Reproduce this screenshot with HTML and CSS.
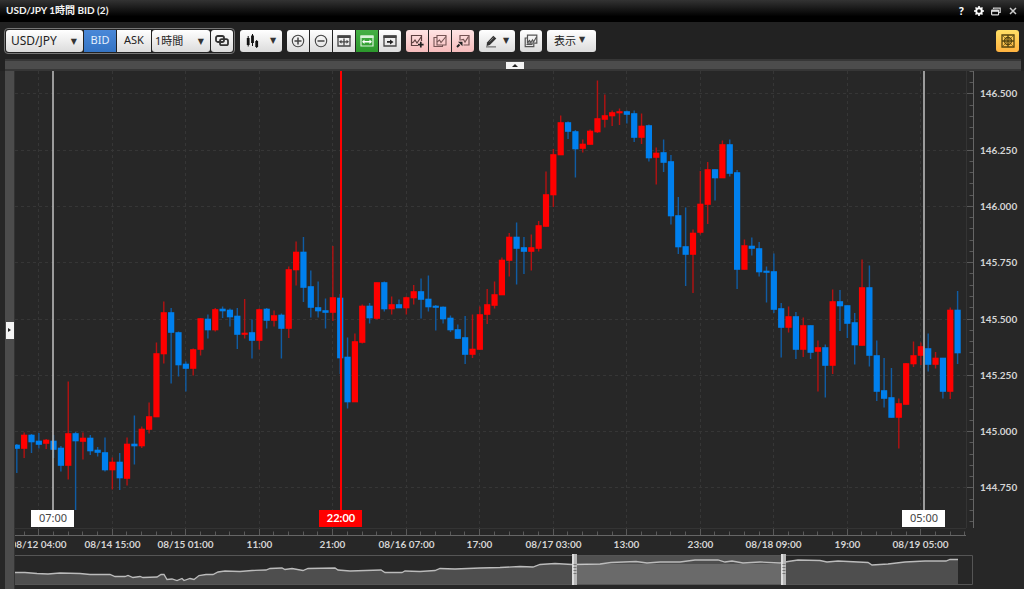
FILE: index.html
```html
<!DOCTYPE html>
<html lang="ja">
<head>
<meta charset="utf-8">
<title>USD/JPY 1時間 BID (2)</title>
<link rel="stylesheet" href="styles.css">
</head>
<body>
<header class="titlebar">
  <h1 class="title">USD/JPY 1時間 BID (2)</h1>
  <nav class="window-actions">
    <button class="win" aria-label="ヘルプ">?</button>
    <button class="win" aria-label="設定"><svg width="10" height="10" viewBox="0 0 10 10"><circle cx="5" cy="5" r="2.8" fill="none" stroke="#fff" stroke-width="1.9"/><path d="M5 0v2M5 8v2M0 5h2M8 5h2M1.5 1.5l1.3 1.3M7.2 7.2l1.3 1.3M8.5 1.5L7.2 2.8M2.8 7.2L1.5 8.5" stroke="#fff" stroke-width="1.6"/></svg></button>
    <button class="win" aria-label="元に戻す"><svg width="10" height="9" viewBox="0 0 10 9"><path d="M2.5 2V1.2h6.7v4.3H8" fill="none" stroke="#ccc" stroke-width="1.2"/><rect x=".6" y="3.2" width="7" height="4.6" rx=".5" fill="none" stroke="#ddd" stroke-width="1.2"/><path d="M1 4h6.4" stroke="#eee" stroke-width="1.5"/></svg></button>
    <button class="win" aria-label="閉じる"><svg width="8" height="8" viewBox="0 0 8 8"><path d="M1 1l6 6M7 1L1 7" stroke="#ccc" stroke-width="1.5"/></svg></button>
  </nav>
</header>

<div class="toolbar">
  <div class="framed">
    <span class="picker"><select class="btn pair" aria-label="通貨ペア"><option>USD/JPY</option></select></span>
    <div class="joined">
      <button class="btn side active">BID</button>
      <button class="btn side ask">ASK</button>
    </div>
    <span class="picker"><select class="btn period" aria-label="足種"><option>1時間</option></select></span>
    <button class="btn" aria-label="連動"><svg width="14" height="12" viewBox="0 0 14 12" fill="none" stroke="#333" stroke-width="1.8"><rect x="1" y="1" width="8" height="6" rx="1.8"/><rect x="5" y="4.2" width="8" height="6" rx="1.8"/></svg></button>
  </div>

  <button class="btn chart-type" aria-label="チャート種類"><svg width="13" height="14" viewBox="0 0 13 14"><path d="M2.2 2v10.500M6.500 0v12M10.700 6v8" stroke="#111" stroke-width="1"/><path d="M.8 4h2.800v7H.8zM5.100 1.500h2.800V9H5.100zM9.300 7h2.800v6H9.300z" fill="#111"/></svg><span class="caret">▼</span></button>

  <div class="joined">
    <button class="btn" aria-label="拡大"><svg width="14" height="14" viewBox="0 0 14 14" fill="none" stroke="#444"><circle cx="7" cy="7" r="5.700" stroke-width="1.100"/><path d="M7 3.500v7M3.500 7h7" stroke-width="1.500"/></svg></button>
    <button class="btn" aria-label="縮小"><svg width="14" height="14" viewBox="0 0 14 14" fill="none" stroke="#444"><circle cx="7" cy="7" r="5.700" stroke-width="1.100"/><path d="M3.500 7h7" stroke-width="1.500"/></svg></button>
    <button class="btn" aria-label="幅調整"><svg width="14" height="12" viewBox="0 0 14 12"><path d="M1 1h12v10H1z" fill="none" stroke="#444" stroke-width="1.300"/><path d="M.5.500h13V3H.5z" fill="#444"/><path d="M2 6.800l2.500-2v1.400h5V4.800l2.500 2-2.500 2V7.400h-5v1.400z" fill="#444"/><path d="M7 3.500v7" stroke="#444" stroke-width="1.300"/></svg></button>
    <button class="btn on" aria-label="全体表示"><svg width="14" height="12" viewBox="0 0 14 12"><path d="M1 1h12v10H1z" fill="none" stroke="#d8f2d8" stroke-width="1.200"/><path d="M.5.500h13V3H.5z" fill="#d8f2d8"/><path d="M2 6.800l2.500-2.200v1.500h5V4.600l2.500 2.200L9.500 9V7.500h-5V9z" fill="#fff"/></svg></button>
    <button class="btn" aria-label="最新へ"><svg width="14" height="12" viewBox="0 0 14 12"><path d="M1 1h12v10H1z" fill="none" stroke="#444" stroke-width="1.300"/><path d="M.5.500h13V3H.5z" fill="#444"/><path d="M4 6h3V4.400l3.500 2.500L7 9.400V7.800H4z" fill="#222"/></svg></button>
  </div>

  <div class="joined pink">
    <button class="btn" aria-label="指標追加"><svg width="14" height="14" viewBox="0 0 14 14" fill="none" stroke="#5d4040" stroke-width="1.200"><path d="M11.500 7V1.500h-10v10H8"/><path d="M1.500 9l2-1 1.500-2 2 3 4.500-6.500"/><path d="M10.800 7.800v5.600M8 10.600h5.600" stroke="#222" stroke-width="1.700"/></svg></button>
    <button class="btn" aria-label="指標複製"><svg width="14" height="14" viewBox="0 0 14 14" fill="none" stroke="#755454" stroke-width="1.100"><path d="M4 3.500H1v9h8.500V11"/><path d="M4 1.500h9V11H4z"/><path d="M4 8l2.500-2L8 8.500l5-6"/></svg></button>
    <button class="btn" aria-label="指標呼出"><svg width="14" height="14" viewBox="0 0 14 14" fill="none" stroke="#755454" stroke-width="1.200"><path d="M4 6.500v-5h9V11H7.500"/><path d="M4.500 6l3-.5L9 8l3.500-5.500"/><path d="M1 13l2.500-2.500" stroke="#222" stroke-width="2"/><path d="M2 7.700h4.500v4.500z" fill="#222" stroke="none"/></svg></button>
  </div>

  <button class="btn pen" aria-label="描画"><svg width="13" height="14" viewBox="0 0 13 14"><path d="M2 8.500L8.300 1.800l3 2.700-6.500 6.600L1.600 12z" fill="#333"/><path d="M4.500 7.700l4-4.100" stroke="#999" stroke-width=".8"/><path d="M1 12.900h10" stroke="#555" stroke-width="1"/></svg><span class="caret">▼</span></button>

  <button class="btn" aria-label="チャート複製"><svg width="14" height="14" viewBox="0 0 14 14" fill="none" stroke="#555" stroke-width="1.200"><path d="M3.500 1.200h9.300v8H3.500z"/><path d="M3 4H1.200v8.700h8.600V10"/><path d="M3.500 8.500l2-2 1.200 2 1.800-2.500 1 2L12.500 3M2.500 10.500h6"/></svg></button>

  <button class="btn display">表示<span class="caret">▼</span></button>

  <button class="btn grid-btn" aria-label="分割"><svg width="14" height="14" viewBox="0 0 14 14" fill="none" stroke="#54430f" stroke-width="1.300"><path d="M1 1h12v12H1zM7 1v12M1 7h12"/><circle cx="7" cy="7" r="3.500"/><path d="M2 2l10 10M12 2L2 12" stroke-width=".6"/></svg></button>
</div>

<div class="splitter-top"><button class="tab-up" aria-label="折りたたむ"><svg width="6" height="4" viewBox="0 0 6 4"><path d="M0 4l3-3 3 3z" fill="#222"/></svg></button></div>

<main class="workspace">
  <div class="splitter-left"><button class="tab-side" aria-label="開く"><svg width="3" height="4" viewBox="0 0 3 4"><path d="M0 0l3 2-3 2z" fill="#222"/></svg></button></div>
  <div class="charts">
    <div class="plot-box"><svg id="plot" class="plot"></svg></div>
    <div class="nav-box"><svg id="navigator" class="plot"></svg></div>
  </div>
</main>
<script src="chart.js"></script>
</body>
</html>
```

FILE: styles.css
```css
* { box-sizing: border-box; }

html, body { height: 100%; }

body {
  margin: 0;
  display: flex;
  flex-direction: column;
  overflow: hidden;
  background: #222;
  color: #ddd;
  font-family: "Noto Sans", "Noto Sans CJK JP", sans-serif;
  font-size: 12px;
}

button, select { margin: 0; padding: 0; border: 0; font: inherit; color: inherit; }

.titlebar {
  display: flex;
  justify-content: space-between;
  align-items: center;
  flex: none;
  height: 22px;
  padding: 0 4px 0 6px;
  background: linear-gradient(#333, #000 75%);
}

.title {
  margin: 0;
  padding-bottom: 4px;
  color: #f4f4f4;
  font-family: Lato, "Noto Sans CJK JP", sans-serif;
  font-size: 10px;
  font-weight: 700;
}

.window-actions { display: flex; gap: 2px; }

.win {
  display: grid;
  place-items: center;
  width: 15px;
  height: 20px;
  background: none;
  color: #fff;
  font-size: 10px;
  font-weight: 700;
}

.toolbar {
  display: flex;
  align-items: center;
  flex: none;
  gap: 5px;
  height: 37px;
  padding: 0 5px 0 4px;
}

.framed {
  display: flex;
  gap: 1px;
  padding: 1px;
  border: 1px solid #777;
  border-radius: 4px;
}

.joined { display: flex; gap: 1px; }

.btn {
  display: flex;
  align-items: center;
  justify-content: center;
  width: 22px;
  height: 22px;
  border-radius: 3px;
  background: linear-gradient(#fff, #dcdcdc);
  color: #222;
}

.joined .btn { border-radius: 0; }
.joined .btn:first-child { border-radius: 3px 0 0 3px; }
.joined .btn:last-child { border-radius: 0 3px 3px 0; }
.framed .joined .btn { border-radius: 0; }

.picker { position: relative; display: flex; }

.picker::after {
  content: "▼";
  position: absolute;
  right: 6px;
  top: 8px;
  color: #333;
  font: 8px/8px "DejaVu Sans", sans-serif;
  pointer-events: none;
}

select.btn { appearance: none; padding-left: 5px; }

.pair { width: 77px; }
select.period { width: 58px; padding-left: 3px; font-size: 11px; }
.btn.side { width: 32px; padding-bottom: 2px; font-size: 11px; }
.btn.ask { width: 34px; }
.btn.side.active { background: linear-gradient(#4a88d8, #3474c4); color: #e4effc; }
.btn.chart-type { width: 42px; gap: 11px; }
.btn.pen { width: 36px; gap: 5px; }
.btn.display { width: 49px; gap: 3px; padding: 0 4px 2px 0; font-size: 11px; }
.btn.on { background: linear-gradient(#45b045, #2c982c); }
.pink .btn { background: linear-gradient(#ffe4e4, #f6bcbc); }
.btn.grid-btn { width: 23px; margin-left: auto; background: linear-gradient(#ffdf66, #ffb340); }

.caret { color: #333; font: 8px/8px "DejaVu Sans", sans-serif; }

.splitter-top {
  display: flex;
  justify-content: center;
  align-items: center;
  flex: none;
  height: 12px;
  margin: 0 3px 0 5px;
  padding-left: 3px;
  border: solid #363636;
  border-width: 2px 0;
  background: #4c4c4c;
}

.tab-up {
  display: grid;
  place-items: center;
  width: 18px;
  height: 7px;
  background: #f4f4f4;
}

.workspace { display: flex; flex: 1; min-height: 0; padding-left: 5px; background: #272727; }

.splitter-left {
  display: flex;
  flex: none;
  flex-direction: column;
  align-items: center;
  justify-content: center;
  width: 10px;
  border-right: 1px solid #333;
  background: #4c4c4c;
}

.tab-side {
  display: grid;
  place-items: center;
  width: 8px;
  height: 17px;
  background: #f4f4f4;
}

.charts { display: flex; flex: 1; flex-direction: column; min-width: 0; }
.plot-box { flex: 1; min-height: 0; }
.nav-box { flex: none; height: 36px; }
.plot { display: block; width: 100%; height: 100%; overflow: hidden; }

.bg { fill: #272727; }
.grid { stroke: #363636; stroke-dasharray: 3 3; }
.edge { stroke: #343434; }
.axis { stroke: #666; }
.tick { stroke: #5a5a5a; }
.label { fill: #d4d4d4; font: 700 10px Lato, sans-serif; }
.up { fill: #f00; }
.down { fill: #0080ee; }
.wick-up { fill: #b41212; }
.wick-down { fill: #105ca4; }
.marker { fill: #b0b0b0; fill-opacity: .85; }
.marker-now { fill: #f00; }
.tag { fill: #fff; }
.tag-text { fill: #444; font: 11px "Noto Sans", sans-serif; }
.tag-text-now { fill: #fff; font: 700 11px Lato, sans-serif; }

.frame { fill: none; stroke: #555; }
.area { fill: #4e4e4e; }
.line { fill: none; stroke: #bbb; stroke-width: 1.3; }
.window { fill: #fff; fill-opacity: .16; }
.window-top { fill: #505050; }
.handle { fill: #b8b8b8; }
.handle-light { fill: #dedede; }
.handle-grip { stroke: #777; stroke-dasharray: 1 2; stroke-width: 3; }
```

FILE: chart.js
```js
// Each candle: direction (u = up, d = down), high, body top, body bottom, low, as chart levels.
const candles = `
d444,445,448.5,473 u432.5,435,448.5,458 d434,435,442,453 d433,441,444.5,448.5 u439,440,443.5,449
d435,441,449.5,458 d446,448,465.5,471.5 u381.5,433.5,465.5,479.5 d432,433.5,441,510 u432.5,438,441.5,459.5
d435,438,451,455 d447,450,452.5,456.5 d437.5,452.5,470,471.5 u457.5,462,470,489.5 d453,462,478,490
u437.5,444,478.5,485.5 d415.5,444,446,464.5 u426.5,429,446,448 u402.5,416.5,429.5,433.5 u342.5,353.5,417,417
u301.5,312.5,354,363.5 d308,312.5,332.5,383.5 d331.5,332.5,365,376.5 d361.5,364,368.5,391.5 u348.5,349.5,368.5,375.5
u318,318.5,349.5,355.5 d314.5,319,330,338.5 u308,309.5,330,331.5 d306.5,309,311,318 d308.5,310,317,326.5
d308,316,334.5,349 u299,333,334.5,338.5 d319.5,332.5,340.5,358.5 u308.5,309.5,340.5,349.5 d308,309,320.5,328.5
u310.5,315.5,320.5,326.5 d313.5,315,328.5,358.5 u266.5,269.5,328.5,338 u241.5,252,270,285.5 d237,252,287.5,302
d270.5,286.5,307.5,317.5 d281.5,307.5,311,317.5 d298.5,310.5,312.5,328.5 u246,297.5,312.5,321 d294,298,358,374
d337.5,357,402,408.5 u333.5,341.5,402,402 u304.5,306,342.5,343.5 d303,306,318,323.5 u282.5,282.5,318.5,319.5
d281.5,282.5,309,311.5 u296.5,304.5,309,314.5 d299.5,304.5,308,308 u296.5,297.5,308,314.5 u285,291.5,298,304.5
d278.5,291.5,299.5,318.5 d275.5,299,307,311.5 d305,306,307.5,330.5 d306.5,307,319,323.5 d315.5,318,330,332
d324.5,329.5,338.5,339 d316,337.5,354.5,364 u314.5,349,354.5,358 u306.5,314.5,349.5,349.5 u289,304.5,314.5,324
u281.5,294.5,305.5,308.5 u257.5,260,295,295 u233,237,260.5,276.5 d222.5,237,248.5,284.5 d237,247.5,251.5,274
u234.5,247.5,251.5,270.5 u221,225.5,248.5,251.5 u171.5,194.5,226.5,226.5 u149,154.5,195,207 u115.5,122.5,155,155
d121.5,122.5,131.5,139 d130,131.5,149,177.5 u139.5,144,148.5,152.5 u129.5,131,144.5,144.5 u80.5,118.5,132,133
u94.5,115.5,119.5,127.5 u110.5,112.5,116,126 u108.5,111.5,113,125 d110.5,111.5,114.5,123.5 d110.5,113.5,137.5,142
u113.5,126,137.5,144 d124.5,125.5,158,161.5 u147.5,153,157.5,184.5 d139.5,152.5,162.5,172 d155,161.5,216,224.5
d197,215.5,247,254 d207.5,246.5,254.5,286 u229.5,233,254.5,293 u171,204,232.5,234.5 u162,169.5,204.5,224
d169.5,169.5,178,200.5 u140.5,144.5,178,178 d139.5,144.5,173.5,176.5 d170,172.5,269.5,289 u239.5,245.5,269.5,269.5
d237.5,246,248.5,255.5 d242,248.5,272,276.5 d266.5,271,272.5,302.5 d253.5,271.5,309.5,313 d303,308.5,327.5,357.5
u306.5,316.5,327.5,332.5 d312,316.5,349.5,359 u317.5,325.5,349.5,357 d325.5,325.5,352.5,359 u340.5,347.5,351.5,391.5
d344.5,347.5,365.5,397.5 u289.5,301.5,365.5,374 d290,301.5,306,331 d305.5,305.5,323.5,338 d313,322.5,345,364.5
u259.5,287.5,345.5,345.5 d265.5,287.5,355.5,366.5 d340.5,355.5,391.5,401 d358,390.5,398.5,407.5 d368,397.5,417.5,417.5
u398.5,403.5,417.5,448.5 u363,363.5,404.5,404.5 u341.5,355.5,364,367 u342.5,346.5,355.5,365 d333.5,348.5,364.5,371.5
u352,358,364.5,368.5 d358,358,391.5,398.5 u307.5,310,391.5,399 d291,310,353,364`.trim().split(/\s+/)
  .map(s => [s[0], ...s.slice(1).split(",").map(Number)]);

const times = ["08/12 04:00", "08/14 15:00", "08/15 01:00", "11:00", "21:00", "08/16 07:00", "17:00",
  "08/17 03:00", "13:00", "23:00", "08/18 09:00", "19:00", "08/19 05:00"];

const trend = [[15,572.5],[25,572.5],[37,573.5],[48,574],[60,573],[80,573.5],[90,574.5],[110,574.5],[115,576.5],
  [125,576.5],[128,575.5],[133,577.5],[140,576.5],[143,577.5],[157,577],[161,574.5],[164,574.5],[167,579.5],
  [172,579],[177,580.5],[182,578.5],[184,580.5],[190,578.5],[194,579.5],[199,575.5],[206,574.5],[213,574.5],[218,572],
  [225,571],[240,571.5],[252,570.5],[266,570],[270,568.5],[282,568],[285,569.5],[292,568.5],[303,570.5],[308,568.5],
  [335,568],[338,570],[350,571],[381,570],[385,572.5],[402,572.5],[405,571],[420,571.5],[435,570.5],[440,568.5],
  [455,569],[480,568],[500,567.5],[520,566.5],[533,567],[540,564.5],[555,563.5],[572,564.5],[600,564],[611,562.5],
  [636,561.5],[647,563],[660,562],[680,562],[695,560],[718,560],[725,562],[732,561],[743,563],[760,562],[780,563],
  [788,561.5],[798,560],[820,560.5],[827,562],[838,561],[868,562.5],[872,565],[888,564],[905,562],[925,561],
  [946,561],[950,559.5],[958,559.5]];

const rect = (c, x, y, w, h) => `<rect class="${c}" x="${x}" y="${y}" width="${w}" height="${h}"/>`;
const line = (c, x1, y1, x2, y2) => `<line class="${c}" x1="${x1}" y1="${y1}" x2="${x2}" y2="${y2}"/>`;
const text = (c, x, y, s, a) => `<text class="${c}" x="${x}" y="${y}" text-anchor="${a}">${s}</text>`;
const crisp = v => Math.floor(v) + 0.5;

function drawPlot() {
  const el = document.getElementById("plot");
  const w = el.clientWidth, h = el.clientHeight;
  const X = v => (v - 15) * (w - 58) / 951;
  const Y = v => (v - 71) * (h - 25) / 457;
  const right = w - 58, floor = h - 25, axisX = w - 50.5, axisY = crisp(h - 18);
  let s = "";
  for (let i = 0; i < 8; i++) {
    const y = crisp(Y(93.8 + i * 56.3));
    s += line("grid", 0, y, right, y) + line("tick", right, y, axisX, y);
    s += text("label", w - 44, y + 3, (146.5 - i * 0.25).toFixed(3), "start");
  }
  for (let v = 71.3; v < 527; v += 11.26) {
    const y = crisp(Y(v));
    s += line("tick", axisX - 4, y, axisX, y);
  }
  times.forEach((t, i) => {
    const x = crisp(X(38.7 + i * 73.5));
    s += line("grid", x, 0, x, floor) + line("tick", x, floor, x, axisY) + text("label", x, h - 5, t, "middle");
  });
  for (let v = 24; v < 967; v += 14.7) {
    const x = crisp(X(v));
    s += line("tick", x, axisY - 4, x, axisY);
  }
  s += line("edge", right + .5, 0, right + .5, floor) + line("edge", 0, floor + .5, right, floor + .5);
  s += line("axis", axisX, 0, axisX, floor) + line("axis", 0, axisY, right, axisY);
  candles.forEach(([d, hi, top, bot, lo], i) => {
    const x = X(16.8 + i * 7.35), k = d === "u" ? "up" : "down";
    s += rect("wick-" + k, x - .7, Y(hi), 1.4, Y(lo) - Y(hi));
    s += rect(k, x - 3.1, Y(top) - .3, 6.2, Math.max(1.5, Y(bot) - Y(top) + .6));
  });
  [[53, "07:00", ""], [341, "22:00", "-now"], [924.4, "05:00", ""]].forEach(([v, t, now]) => {
    const x = Math.round(X(v));
    s += rect("marker" + now, x - 1, 0, 2, floor - 18);
    s += rect(now ? "marker-now" : "tag", x - 22, floor - 18, 43, 17);
    s += text(now ? "tag-text-now" : "tag-text", x, floor - 6, t, "middle");
  });
  el.innerHTML = s;
}

function drawNavigator() {
  const el = document.getElementById("navigator");
  const w = el.clientWidth;
  const X = v => (v - 15) * (w - 51) / 958;
  const pts = trend.map(([x, y]) => `${X(x).toFixed(1)},${y - 553}`).join(" ");
  const a = X(574), b = X(783);
  let s = rect("window-top", a, 3, b - a, 28);
  s += `<polygon class="area" points="0,31 ${pts} ${X(958)},31"/><polyline class="line" points="${pts}"/>`;
  s += rect("window", a, 11, b - a, 20);
  s += `<path class="frame" d="M0 2.500H${w - 51.5}V31.500H0"/>`;
  for (const x of [Math.round(a), Math.round(b)]) {
    s += rect("handle", x - 2, 1, 5, 31) + rect("handle-light", x - 2, 1, 2, 31) + line("handle-grip", x + 1, 11, x + 1, 22);
  }
  el.innerHTML = s;
}

function draw() { drawPlot(); drawNavigator(); }
addEventListener("resize", draw);
draw();
```
